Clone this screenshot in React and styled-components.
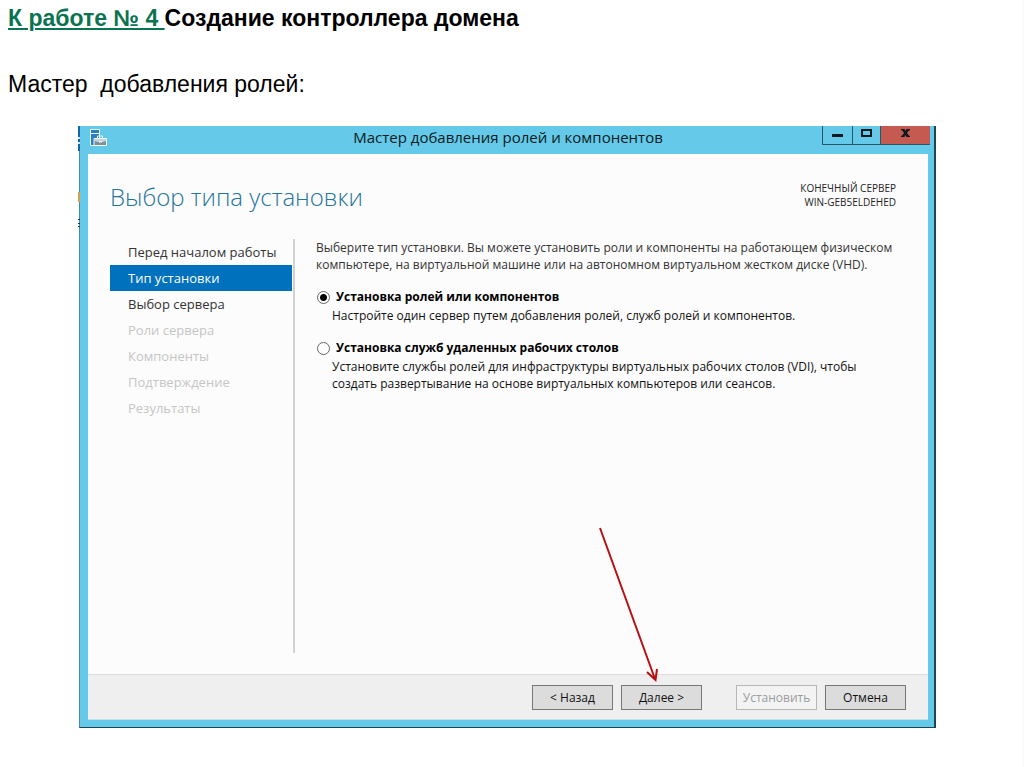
import React, { useState } from 'react'
import styled, { createGlobalStyle } from 'styled-components'

const steps = [
  { title: 'Перед началом работы', state: 'ready' },
  { title: 'Тип установки', state: 'current' },
  { title: 'Выбор сервера', state: 'ready' },
  { title: 'Роли сервера', state: 'locked' },
  { title: 'Компоненты', state: 'locked' },
  { title: 'Подтверждение', state: 'locked' },
  { title: 'Результаты', state: 'locked' },
]

const options = [
  {
    id: 'roles',
    title: 'Установка ролей или компонентов',
    text: 'Настройте один сервер путем добавления ролей, служб ролей и компонентов.',
  },
  {
    id: 'rds',
    title: 'Установка служб удаленных рабочих столов',
    text: 'Установите службы ролей для инфраструктуры виртуальных рабочих столов (VDI), чтобы создать развертывание на основе виртуальных компьютеров или сеансов.',
  },
]

const ServerIcon = () => (
  <svg width='17' height='18' viewBox='0 0 17 18' aria-hidden='true'>
    <path d='M0.5 0.5h9v16h-9z' fill='#2b7fc0' stroke='#e8f6fc' />
    <path d='M1 4.5h8' stroke='#e8f6fc' />
    <path d='M4 9.500h12.500v7h-12.500z' fill='#7d8f9b' stroke='#f4fafd' />
    <path d='M7.500 9v-2h5v2' fill='none' stroke='#f4fafd' />
    <path d='M4.500 10h11.500v2l-3 1h-5l-3.500-1z' fill='#c3d3dc' />
    <path d='M9 13h3' stroke='#fff' />
  </svg>
)

// edges of the windows that lie under the wizard
const Backdrop = () => (
  <BackdropSvg width='2' height='104' viewBox='0 0 2 104' aria-hidden='true'>
    <path d='M0 0h2v25h-2z' fill='#1565a8' />
    <path d='M0 11h2v2h-2zM0 16h2v2h-2z' fill='#d5e6f2' />
    <path d='M0 66h2v10h-2z' fill='#e39a45' />
    <path d='M0 93h2v1h-2zM0 97h2v1h-2zM0 100h2v1h-2z' fill='#333' />
  </BackdropSvg>
)

const App = () => {
  const [selected, setSelected] = useState('roles')
  return (
    <>
      <GlobalStyle />
      <Slide>
        <SlideTitle>
          <a href='#work4'>К работе № 4 </a>Создание контроллера домена
        </SlideTitle>
        <SlideText>Мастер  добавления ролей:</SlideText>
        <Window>
          <Backdrop />
          <TitleBar>
            <ServerIcon />
            <h2>Мастер добавления ролей и компонентов</h2>
            <Caption>
              <CaptionButton type='button' aria-label='Свернуть'>
                <svg width='11' height='13'>
                  <path d='M0 8h11v3h-11z' />
                </svg>
              </CaptionButton>
              <CaptionButton type='button' aria-label='Развернуть'>
                <svg width='11' height='13'>
                  <path
                    d='M1 4h9v6h-9z'
                    fill='none'
                    stroke='#0a1a20'
                    strokeWidth='2'
                  />
                </svg>
              </CaptionButton>
              <CaptionButton type='button' aria-label='Закрыть' $close>
                <svg width='11' height='13'>
                  <path
                    d='M3 3.500L8 10.500M8 3.500L3 10.500'
                    stroke='#0a1a20'
                    strokeWidth='2.400'
                  />
                  <path d='M1 3h3.500v1.200h-3.500zM6.500 3h3.500v1.200h-3.500zM1 9.800h3.500v1.200h-3.500zM6.500 9.800h3.500v1.200h-3.500z' />
                </svg>
              </CaptionButton>
            </Caption>
          </TitleBar>
          <Body>
            <Header>
              <h1>Выбор типа установки</h1>
              <Target>
                КОНЕЧНЫЙ СЕРВЕР
                <br />
                WIN-GEB5ELDEHED
              </Target>
            </Header>
            <Content>
              <Steps>
                {steps.map(({ title, state }) => (
                  <Step key={title} type='button' $state={state} disabled={state === 'locked'}>
                    {title}
                  </Step>
                ))}
              </Steps>
              <Main>
                <p>
                  Выберите тип установки. Вы можете установить роли и компоненты
                  на работающем физическом компьютере, на виртуальной машине или
                  на автономном виртуальном жестком диске (VHD).
                </p>
                {options.map(({ id, title, text }) => (
                  <Option key={id}>
                    <label htmlFor={id}>
                      <input
                        type='radio'
                        name='install'
                        id={id}
                        checked={selected === id}
                        onChange={() => setSelected(id)}
                      />
                      {title}
                    </label>
                    <p>{text}</p>
                  </Option>
                ))}
              </Main>
            </Content>
            <Footer>
              <Button type='button'>&lt; Назад</Button>
              <Next>
                <Button type='button'>Далее &gt;</Button>
                <Arrow width='64' height='160' viewBox='0 0 64 160' aria-hidden='true'>
                  <path d='M2 3L57 154M49 147L57.500 155L59 144' />
                </Arrow>
              </Next>
              <Button type='button' disabled>
                Установить
              </Button>
              <Button type='button'>Отмена</Button>
            </Footer>
          </Body>
        </Window>
      </Slide>
    </>
  )
}

export default App

const GlobalStyle = createGlobalStyle`
  * {
    box-sizing: border-box;
  }
  body {
    margin: 0;
    background: #fff;
  }
  h1, h2, p {
    margin: 0;
    font-weight: 400;
  }
  button {
    font: inherit;
    padding: 0;
  }
`

const Slide = styled.main`
  display: flex;
  flex-direction: column;
  min-height: 100vh;
  padding: 4px 8px 39px;
  border-right: 2px solid #fbfbfb;
  font-family: 'Liberation Sans', Arial, sans-serif;
  font-size: 23px;
  line-height: 28px;
  color: #000;
`

const SlideTitle = styled.h1`
  font-size: 23px;
  font-weight: 700;
  white-space: pre-wrap;
  a {
    color: #0b7350;
  }
`

const SlideText = styled.p`
  margin: 38px 0 28px;
  white-space: pre-wrap;
`

const Window = styled.section`
  position: relative;
  flex: 1;
  display: flex;
  flex-direction: column;
  margin: 0 78px 0 71px;
  padding: 0 6px 7px 8px;
  border: solid #1d4654;
  border-width: 0 2px 1px 1px;
  border-left-color: #4a8ba3;
  background: #65c9e9;
  font-family: 'Open Sans', 'Noto Sans', sans-serif;
  font-size: 12px;
  line-height: 17px;
`

const BackdropSvg = styled.svg`
  position: absolute;
  top: 0;
  left: -2px;
`

const TitleBar = styled.header`
  display: grid;
  grid-template-columns: 108px 1fr 108px;
  align-items: start;
  height: 28px;
  > svg {
    margin: 3px 2px;
  }
  h2 {
    font-size: 15px;
    line-height: 22px;
    text-align: center;
    color: #0a1a20;
  }
`

const Caption = styled.div`
  display: grid;
  grid-template-columns: 30px 28px 50px;
  margin: 0 -2px 0 2px;
`

const CaptionButton = styled.button`
  display: grid;
  justify-content: center;
  align-content: start;
  height: 19px;
  border: solid #27586a;
  border-width: 0 0 1px 1px;
  background: ${({ $close }) => ($close ? '#c45a50' : '#65c9e9')};
  fill: #0a1a20;
`

const Body = styled.div`
  flex: 1;
  display: flex;
  flex-direction: column;
  background: #fcfcfc;
  border-bottom: 1px solid #c8dfe8;
`

const Header = styled.div`
  display: flex;
  justify-content: space-between;
  padding: 26px 32px 0 22px;
  h1 {
    font-size: 24px;
    font-weight: 300;
    line-height: 34px;
    color: #24759a;
  }
`

const Target = styled.p`
  padding-top: 1px;
  font-size: 10px;
  line-height: 14px;
  text-align: right;
  color: #222;
`

const Content = styled.div`
  flex: 1;
  display: grid;
  grid-template-columns: 185px 1fr;
  gap: 21px;
  padding: 25px 32px 21px 22px;
`

const Steps = styled.nav`
  display: flex;
  flex-direction: column;
  padding-right: 1px;
  border-right: 2px solid #d2d2d2;
`

const stepColors = { ready: '#333', current: '#fff', locked: '#c6c6c6' }

const Step = styled.button`
  height: 26px;
  padding-left: 18px;
  border: 0;
  font-size: 13px;
  text-align: left;
  color: ${({ $state }) => stepColors[$state]};
  background: ${({ $state }) => ($state === 'current' ? '#0071bc' : 'none')};
`

const Main = styled.div`
  color: #333;
`

const Option = styled.div`
  margin-top: 14px;
  color: #111;
  label {
    display: flex;
    align-items: center;
    gap: 6px;
    font-weight: 700;
    line-height: 20px;
    color: #000;
  }
  input {
    appearance: none;
    width: 13px;
    height: 13px;
    margin: 0 0 0 1px;
    border: 1px solid #666;
    border-radius: 50%;
    background: #fff;
  }
  input:checked {
    background: radial-gradient(#000 3px, #fff 4px);
  }
  p {
    margin-left: 16px;
  }
`

const Footer = styled.footer`
  display: flex;
  justify-content: flex-end;
  padding: 10px 22px 9px;
  border-top: 1px solid #dedede;
  background: #efefef;
`

const Button = styled.button`
  width: 81px;
  height: 25px;
  margin-left: 8px;
  border: 1px solid #777;
  background: #dcdcdc;
  font-size: 12px;
  color: #111;
  &:disabled {
    border-color: #b4b8bb;
    background: #f3f3f3;
    color: #9a9da0;
  }
`

const Next = styled.div`
  position: relative;
  margin-right: 26px;
`

const Arrow = styled.svg`
  position: absolute;
  left: -15px;
  bottom: 100%;
  fill: none;
  stroke: #b80f12;
  stroke-width: 2px;
  pointer-events: none;
`
